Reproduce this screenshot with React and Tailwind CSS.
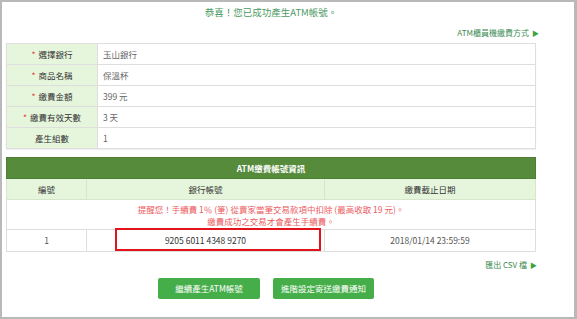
import React from 'react';

const font = { fontFamily: '"Noto Sans CJK TC", "Noto Sans", "Liberation Sans", sans-serif' };

const info = [
  { label: '選擇銀行', value: '玉山銀行', req: true },
  { label: '商品名稱', value: '保溫杯', req: true },
  { label: '繳費金額', value: '399 元', req: true },
  { label: '繳費有效天數', value: '3 天', req: true },
  { label: '產生組數', value: '1', req: false },
];

export default function App() {
  return (
    <div style={font} className="w-[577px] h-[319px] bg-white border-t-2 border-l-2 border-b-2 border-r-[3px] border-[#b9b9b9] overflow-hidden">
      <div className="w-[530px] ml-1">
        {/* Title */}
        <h1 className="text-center text-[9.5px] leading-[18px] pt-[1px] text-[#4b9a62]">恭喜！您已成功產生ATM帳號。</h1>

        <div className="flex justify-end items-center h-[20px] mt-[2px] -mr-[3px] text-[8px] text-[#3d8b54]">
          <span>ATM櫃員機繳費方式</span>
          <span className="ml-[3px] text-[7px] text-[#3aa33a]">▶</span>
        </div>

        {/* Info table */}
        <table className="w-full border-collapse border border-[#dedede] text-[8.5px] shadow-[0_1px_1px_rgba(0,0,0,0.06)]">
          <tbody>
            {info.map(r => (
              <tr key={r.label} className="h-[21px]">
                <td className="w-[91px] bg-[#e6f6dd] border border-[#dedede] text-center text-[#333]">
                  {r.req && <span className="text-[#e0443c] mr-[3px]">*</span>}{r.label}
                </td>
                <td className="border border-[#dedede] pl-[5px] text-[#666]">{r.value}</td>
              </tr>
            ))}
          </tbody>
        </table>

        {/* ATM table */}
        <div className="relative mt-[8px]">
          <table className="w-full border-collapse border border-[#dedede] text-[8.5px]">
            <thead>
              <tr className="h-[21px]">
                <th colSpan={3} className="bg-[#558b3b] text-white font-bold text-center border border-[#4c7f35]">ATM繳費帳號資訊</th>
              </tr>
              <tr className="h-[21px] bg-[#e6f6dd] text-[#333]">
                <th className="w-[80px] font-normal border border-[#d6e6cd]">編號</th>
                <th className="w-[238px] font-normal border border-[#d6e6cd]">銀行帳號</th>
                <th className="font-normal border border-[#d6e6cd]">繳費截止日期</th>
              </tr>
            </thead>
            <tbody>
              <tr className="h-[30px]">
                <td colSpan={3} className="text-center text-[#ec5a5e] leading-[12px] border border-[#dedede]">
                  提醒您！手續費 1％ (筆) 從賣家當筆交易款項中扣除 (最高收取 19 元)。<br />
                  繳費成功之交易才會產生手續費。
                </td>
              </tr>
              <tr className="h-[22px] text-[#555]">
                <td className="text-center border border-[#dedede]">1</td>
                <td className="text-center border border-[#dedede] text-[#333]">9205 6011 4348 9270</td>
                <td className="text-center border border-[#dedede]">2018/01/14 23:59:59</td>
              </tr>
            </tbody>
          </table>
          {/* highlight annotation */}
          <div className="absolute left-[109px] top-[71px] w-[206px] h-[23px] border-2 border-[#e3131b] pointer-events-none" />
        </div>

        <div className="flex justify-end items-center h-[14px] mt-[6px] -mr-[1px] text-[8px] text-[#3d8b54]">
          <span>匯出 CSV 檔</span>
          <span className="ml-[3px] text-[7px] text-[#3aa33a]">▶</span>
        </div>

        <div className="flex justify-center gap-[13px] mt-[6px] pr-[10px]">
          <button className="w-[102px] h-[21px] rounded-[2px] bg-[#46ae49] text-white text-[8.5px]">繼續產生ATM帳號</button>
          <button className="w-[101px] h-[21px] rounded-[2px] bg-[#46ae49] text-white text-[8.5px]">進階設定寄送繳費通知</button>
        </div>
      </div>
    </div>
  );
}
